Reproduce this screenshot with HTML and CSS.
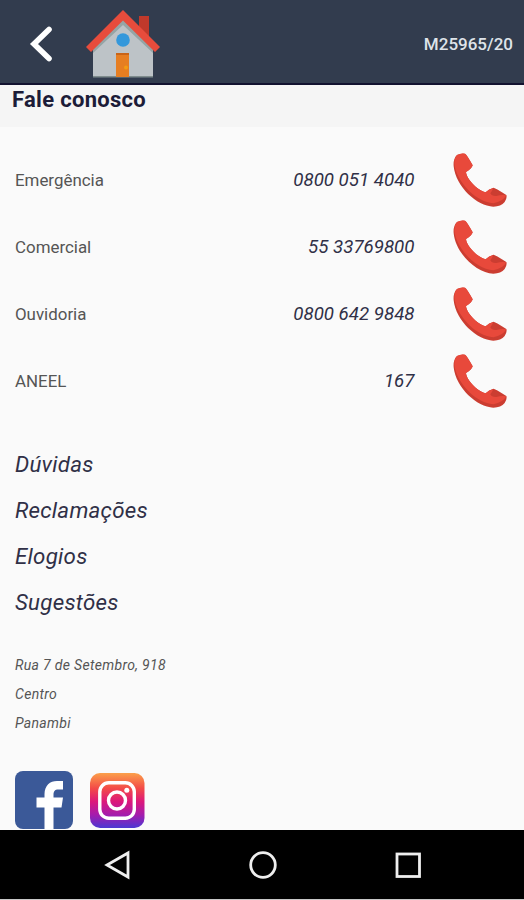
FILE: index.html
```html
<!DOCTYPE html>
<html lang="pt-BR">
<head>
    <meta charset="UTF-8">
    <meta name="viewport" content="width=device-width, initial-scale=1.0">
    <title>Fale conosco</title>
    <link rel="stylesheet" href="styles.css">
</head>
<body>
    <svg class="defs" width="0" height="0">
        <defs>
            <linearGradient id="insta" x1="0" y1="0" x2="0" y2="1">
                <stop offset="0" stop-color="#fba04a"/>
                <stop offset="0.28" stop-color="#f34a48"/>
                <stop offset="0.52" stop-color="#dc187b"/>
                <stop offset="0.76" stop-color="#a51cad"/>
                <stop offset="1" stop-color="#4b38d3"/>
            </linearGradient>
            <symbol id="phone" viewBox="0 0 162 162">
                <path fill="#cb3d31" d="M12 6 Q23 0 36 2 Q41 4 59 37 Q57 46 39 57 C40 76 70 110 98 118 Q108 108 121 104 Q126 104 160 126 Q163 135 155 147 Q144 161 121 161 C72 160 8 101 2 40 Q0 18 12 6Z"/>
                <path fill="#e8493b" d="M12 6 Q23 0 36 2 Q41 4 59 37 Q57 46 39 57 C40 76 70 110 98 118 Q108 108 121 106 Q118 113 112 121 Q116 130 130 129 Q146 124 160 127 Q150 146 121 151 C72 147 18 96 5 40 Q1 18 12 6Z"/>
            </symbol>
        </defs>
    </svg>

    <header class="topo">
        <svg class="voltar" width="24" height="38" viewBox="0 0 24 38">
            <path d="M20 4.5 L5 19 L20 33.5" fill="none" stroke="#fff" stroke-width="5.6" stroke-linecap="round"/>
        </svg>
        <svg class="casa" width="76" height="68" viewBox="0 0 76 68">
            <path fill="#c0392b" d="M54 6h10v24L54 21z"/>
            <path fill="#bdc3c7" d="M8 36 L38 8 L68 36 V67 H8z"/>
            <path fill="#95a5a6" d="M8 36 L38 9 L68 36 V43 L38 15 L8 43z"/>
            <path fill="#7f8c8d" d="M8 66h60v1.5H8z"/>
            <path fill="#e74c3c" d="M38 0 L75 37 L70 42 L38 10.5 L6 42 L1 37z"/>
            <circle cx="38" cy="30" r="6.8" fill="#3498db"/>
            <path fill="#e67e22" d="M31 43h13v24H31z"/>
            <path fill="#c96418" d="M31 43h13v2H31z"/>
            <circle cx="41" cy="57.5" r="2" fill="#f39c12"/>
        </svg>
        <span class="codigo">M25965/20</span>
    </header>

    <main>
        <h1>Fale conosco</h1>

        <div class="telefones">
            <div class="linha"><span>Emergência</span><a class="numero">0800 051 4040</a><svg width="54" height="54"><use href="#phone"/></svg></div>
            <div class="linha"><span>Comercial</span><a class="numero">55 33769800</a><svg width="54" height="54"><use href="#phone"/></svg></div>
            <div class="linha"><span>Ouvidoria</span><a class="numero">0800 642 9848</a><svg width="54" height="54"><use href="#phone"/></svg></div>
            <div class="linha"><span>ANEEL</span><a class="numero">167</a><svg width="54" height="54"><use href="#phone"/></svg></div>
        </div>

        <nav class="assuntos">
            <a>Dúvidas</a>
            <a>Reclamações</a>
            <a>Elogios</a>
            <a>Sugestões</a>
        </nav>

        <address>
            Rua 7 de Setembro, 918<br>
            Centro<br>
            Panambi
        </address>

        <div class="redes">
            <svg width="58" height="58" viewBox="0 0 58 58">
                <rect width="58" height="58" rx="8" fill="#3b5998"/>
                <path fill="#fff" d="M29.5 58V36.5H21.5V26.5H29.5V23C29.5 14.5 35 10 42 10H48V18.5H43.5C39.5 18.5 38.5 20.5 38.5 24V26.5H48L46.5 36.5H38.5V58z"/>
            </svg>
            <svg class="instagram" width="55" height="55" viewBox="0 0 55 55">
                <rect width="54.5" height="55" rx="10" fill="url(#insta)"/>
                <g fill="none" stroke="#fff" stroke-width="3.4">
                    <rect x="9.8" y="9.8" width="34.5" height="35.5" rx="9"/>
                    <circle cx="27" cy="27.5" r="8.5"/>
                </g>
                <circle cx="36.8" cy="17.3" r="2.5" fill="#fff"/>
            </svg>
        </div>
    </main>

    <footer class="navegacao">
        <svg width="28" height="30" viewBox="0 0 28 30"><path d="M25 3 V27 L4 15z"/></svg>
        <svg width="30" height="30" viewBox="0 0 30 30"><circle cx="15" cy="15" r="12.3"/></svg>
        <svg width="28" height="30" viewBox="0 0 28 30"><rect x="3" y="4" width="22.5" height="22.5"/></svg>
    </footer>
</body>
</html>
```
FILE: styles.css
```css
* {
    box-sizing: border-box;
}
body {
    margin: 0;
    height: 900px;
    display: flex;
    flex-direction: column;
    overflow: hidden;
    font-family: Roboto, "Liberation Sans", sans-serif;
    background-color: #fafafa;
    color: #555;
}
svg {
    display: block;
    flex: none;
}
.defs {
    position: absolute;
}
.topo {
    display: flex;
    align-items: center;
    height: 85px;
    padding: 5px 11px 0 29px;
    background-color: #323c4e;
    border-bottom: 2px solid #12122f;
}
.casa {
    margin-left: 32px;
}
.codigo {
    margin-left: auto;
    font-size: 17px;
    font-weight: 500;
    color: #dfe4ea;
}
main {
    flex: 1;
}
h1 {
    margin: 0;
    height: 42px;
    padding-left: 12px;
    font-size: 22px;
    font-weight: 700;
    line-height: 29px;
    letter-spacing: 0.3px;
    color: #1c1c38;
    background-color: #f5f5f5;
}
.telefones {
    padding: 19px 17px 0 15px;
}
.linha {
    display: flex;
    align-items: center;
    height: 67px;
    font-size: 16.9px;
}
.linha span,
.numero {
    padding-top: 1px;
}
.numero {
    margin-left: auto;
    margin-right: 38.5px;
    font-size: 18.7px;
    font-style: italic;
    color: #303047;
}
.assuntos {
    display: flex;
    flex-direction: column;
    padding: 27px 15px 0;
    font-size: 22.3px;
    font-style: italic;
    line-height: 46px;
    letter-spacing: 0.25px;
    color: #303047;
}
address {
    padding: 26px 15px 0;
    font-size: 14px;
    line-height: 29px;
    letter-spacing: 0.33px;
}
.redes {
    display: flex;
    gap: 17px;
    padding: 33px 15px 0;
}
.instagram {
    margin-top: 2px;
}
.navegacao {
    display: flex;
    justify-content: space-between;
    height: 70px;
    padding: 20px 102px 0 103px;
    background-color: #000;
    border-bottom: 1px solid #c8c8c8;
}
.navegacao svg {
    fill: none;
    stroke: #eee;
    stroke-width: 2.8;
}
```
